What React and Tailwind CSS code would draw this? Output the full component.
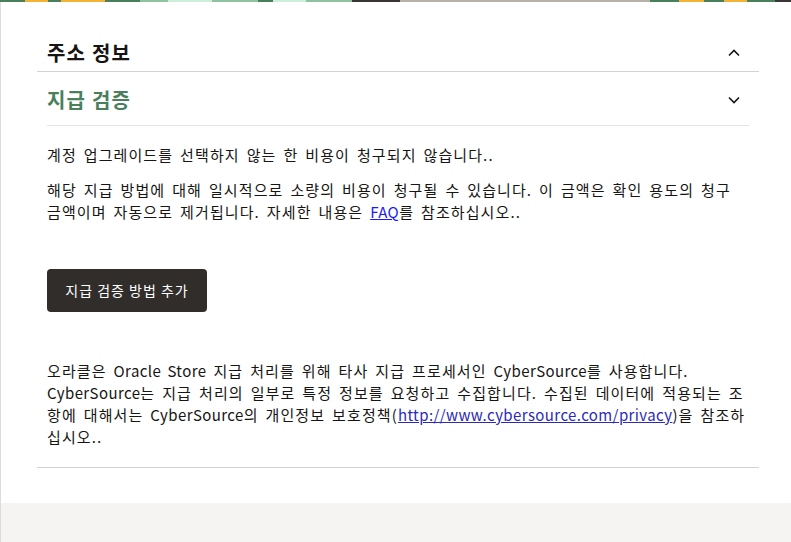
import React from "react";

const stripe = [
  [25, "#4a7f5c"],
  [23, "#f5b335"],
  [13, "#4a7f5c"],
  [44, "#f5b335"],
  [35, "#4a7f5c"],
  [28, "#8fc3a0"],
  [44, "#cdeedb"],
  [46, "#8fc3a0"],
  [15, "#4a7f5c"],
  [33, "#cdeedb"],
  [46, "#8fc3a0"],
  [48, "#3a3634"],
  [250, "#b8b1aa"],
  [29, "#4a7f5c"],
  [25, "#f5b335"],
  [20, "#4a7f5c"],
  [23, "#f5b335"],
  [28, "#4a7f5c"],
  [16, "#3a3634"],
];

function Chevron({ up }) {
  return (
    <svg width="12" height="8" viewBox="0 0 12 8" fill="none">
      <polyline
        points={up ? "1,6.5 6,1.5 11,6.5" : "1,1.5 6,6.5 11,1.5"}
        stroke="#161513"
        strokeWidth="1.6"
      />
    </svg>
  );
}

function L({ children }) {
  return <span className="tracking-[0.4px]">{children}</span>;
}

export default function App() {
  return (
    <div
      className="w-[791px] h-[542px] bg-white text-[#161513] overflow-hidden flex flex-col"
      style={{ fontFamily: '"Noto Sans CJK KR", "Noto Sans", sans-serif' }}
    >
      <div className="flex h-[2px] shrink-0">
        {stripe.map(([w, c], i) => (
          <div key={i} style={{ width: w, background: c }} />
        ))}
      </div>
      <div className="flex-1 border-l border-[#dcdcdc] flex flex-col">
        <div className="h-[501px] pt-[32px]">
          <div className="ml-[36px] w-[722px]">
            <div className="flex justify-between items-center h-[38px] pl-[10px] pr-[19px] pt-[1px] border-b border-[#d3d3d3]">
              <span className="text-[20px] font-bold leading-[28px] tracking-[1.2px]">주소 정보</span>
              <span className="flex"><Chevron up /></span>
            </div>
            <div className="px-[10px]">
              <div className="flex justify-between items-center h-[54px] pt-[3px] pr-[9px] border-b border-[#e4e4e4]">
                <span className="text-[20px] font-bold leading-[28px] tracking-[1.2px] text-[#4a7f5c]">지급 검증</span>
                <span className="flex"><Chevron /></span>
              </div>
              <div className="text-[15px] leading-[22px] tracking-[1.1px] [word-spacing:2.5px]">
                <p className="mt-[18px]">
                  계정 업그레이드를 선택하지 않는 한 비용이 청구되지 않습니다..
                </p>
                <p className="mt-[13px]">
                  해당 지급 방법에 대해 일시적으로 소량의 비용이 청구될 수 있습니다. 이 금액은 확인 용도의 청구 금액이며 자동으로 제거됩니다. 자세한 내용은{" "}
                  <a href="#" className="text-[#1a1aff] underline"><L>FAQ</L></a>를 참조하십시오..
                </p>
              </div>
              <button className="mt-[46px] h-[43px] w-[160px] rounded-[4px] bg-[#312d2a] text-white text-[14px] tracking-[1px] flex items-center justify-center">
                지급 검증 방법 추가
              </button>
              <p className="mt-[48px] text-[15px] leading-[22px] tracking-[1.1px] [word-spacing:2.5px]">
                오라클은 <L>Oracle Store</L> 지급 처리를 위해 타사 지급 프로세서인 <L>CyberSource</L>를 사용합니다. <L>CyberSource</L>는 지급 처리의 일부로 특정 정보를 요청하고 수집합니다. 수집된 데이터에 적용되는 조항에 대해서는 <L>CyberSource</L>의 개인정보 보호정책(
                <a href="#" className="text-[#2b2bb8] underline"><L>http://www.cybersource.com/privacy</L></a>)을 참조하십시오..
              </p>
            </div>
            <div className="mt-[19px] border-b border-[#d3d3d3]" />
          </div>
        </div>
        <div className="flex-1 bg-[#f5f4f2]" />
      </div>
    </div>
  );
}
